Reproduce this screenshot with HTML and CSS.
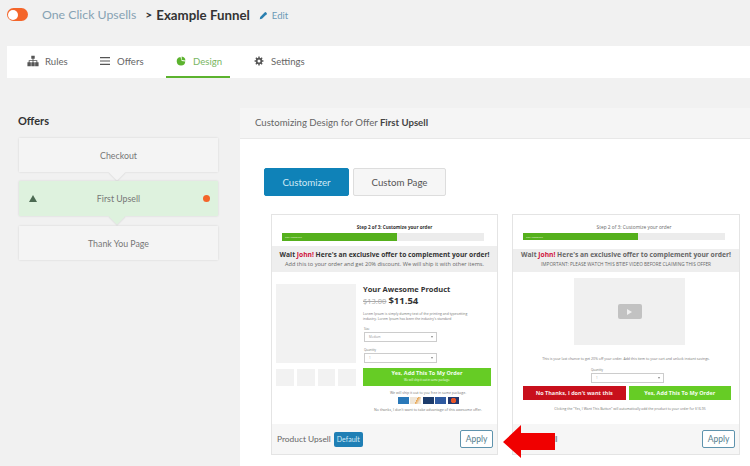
FILE: index.html
```html
<!DOCTYPE html>
<html lang="en">
<head>
    <meta charset="UTF-8">
    <title>Example Funnel</title>
    <link rel="stylesheet" href="styles.css">
</head>
<body>
    <div class="page-header">
        <span class="toggle"><span class="toggle-knob"></span></span>
        <span class="crumb">One Click Upsells</span>
        <span class="crumb-sep">&gt;</span>
        <span class="funnel-name">Example Funnel</span>
        <a class="edit-link">
            <svg class="edit-icon" viewBox="0 0 12 12"><path d="M1 11l.6-3L7.800 1.800a1 1 0 0 1 1.400 0l1 1a1 1 0 0 1 0 1.400L4 10.400z" fill="#2a7fb0"/></svg>
            Edit
        </a>
    </div>

    <div class="tabs">
        <a class="tab tab-rules">
            <svg class="tab-icon" viewBox="0 0 14 12"><path d="M5 0h4v3.500H7.500V5H12v2.500h1.500V12h-4V7.500h1.500V6h-3.500v1.500H9V12H5V7.500h1.500V6H3v1.500h1.500V12h-4V7.500H2V5h4.500V3.500H5z" fill="#555"/></svg>
            Rules
        </a>
        <a class="tab tab-offers">
            <svg class="tab-icon tab-icon-small" viewBox="0 0 10 10"><path d="M0 1h10v1.200H0zM0 4.400h10v1.200H0zM0 7.800h10v1.200H0z" fill="#555"/></svg>
            Offers
        </a>
        <a class="tab tab-design active">
            <svg class="tab-icon tab-icon-small" viewBox="0 0 14 14"><path d="M6.200 1.500A6 6 0 1 0 13 7.800L8 7z" fill="#5cb32e"/><path d="M8 .8a6 6 0 0 1 5.200 5.400L8 5.600z" fill="#5cb32e"/></svg>
            Design
        </a>
        <a class="tab tab-settings">
            <svg class="tab-icon tab-icon-small" viewBox="0 0 14 14"><circle cx="7" cy="7" r="3.300" fill="none" stroke="#555" stroke-width="2.400"/><path d="M7 .8v2.400M7 10.800v2.400M.8 7h2.400M10.800 7h2.400M2.600 2.600l1.700 1.700M9.700 9.700l1.700 1.700M2.600 11.400l1.700-1.700M9.700 4.300l1.700-1.700" stroke="#555" stroke-width="2"/></svg>
            Settings
        </a>
    </div>

    <div class="main">
        <div class="sidebar">
            <h3>Offers</h3>
            <div class="step">Checkout</div>
            <div class="step step-active">
                <span class="step-caret"></span>
                First Upsell
                <span class="step-dot"></span>
            </div>
            <div class="step step-last">Thank You Page</div>
        </div>

        <div class="panel">
            <div class="panel-head">Customizing Design for Offer <b>First Upsell</b></div>
            <div class="panel-body">
                <div class="mode-btns">
                    <a class="mode-btn mode-on">Customizer</a>
                    <a class="mode-btn">Custom Page</a>
                </div>
                <div class="templates">
                    <div class="template">
                        <div class="preview">
                            <div class="pv-step">Step 2 of 3: Customize your order</div>
                            <div class="pv-bar"><div class="pv-fill">60% Complete</div></div>
                            <div class="pv-band">
                                <div class="pv-wait">Wait <span class="pv-name">John!</span> Here's an exclusive offer to complement your order!</div>
                                <div class="pv-sub">Add this to your order and get 20% discount. We will ship it with other items.</div>
                            </div>
                            <div class="pv-product">
                                <div class="pv-gallery">
                                    <div class="pv-image"></div>
                                    <div class="pv-thumbs"><i></i><i></i><i></i><i></i></div>
                                </div>
                                <div class="pv-info">
                                    <div class="pv-title">Your Awesome Product</div>
                                    <div class="pv-price"><s>$13.00</s> <b>$11.54</b></div>
                                    <div class="pv-lorem">Lorem Ipsum is simply dummy text of the printing and typesetting industry. Lorem Ipsum has been the industry's standard</div>
                                    <div class="pv-label">Size</div>
                                    <div class="pv-select">Medium</div>
                                    <div class="pv-label">Quantity</div>
                                    <div class="pv-select">1</div>
                                    <div class="pv-yes pv-yes-big">Yes, Add This To My Order<small>We will ship it out in same package.</small></div>
                                    <div class="pv-note">We will ship it out to you free in same package.</div>
                                    <div class="pv-cards"><i class="c-amex"></i><i class="c-disc"></i><i class="c-dark"></i><i class="c-visa"></i><i class="c-mc"></i></div>
                                    <div class="pv-note pv-note-long">No thanks, I don't want to take advantage of this awesome offer.</div>
                                </div>
                            </div>
                        </div>
                        <div class="template-foot">
                            <span class="foot-name">Product Upsell</span>
                            <span class="badge">Default</span>
                            <a class="apply">Apply</a>
                        </div>
                    </div>

                    <div class="template template-video">
                        <div class="preview">
                            <div class="pv-step pv-step-light">Step 2 of 3: Customize your order</div>
                            <div class="pv-bar"><div class="pv-fill">60% Complete</div></div>
                            <div class="pv-band pv-band-tall">
                                <div class="pv-wait pv-wait-light">Wait <span class="pv-name">John!</span> Here's an exclusive offer to complement your order!</div>
                                <div class="pv-sub">IMPORTANT: PLEASE WATCH THIS BTIEF VIDEO BEFORE CLAIMING THIS OFFER</div>
                            </div>
                            <div class="pv-video"><span class="pv-play"></span></div>
                            <div class="pv-note pv-note-wide">This is your last chance to get 20% off your order. Add this item to your cart and unlock instant savings.</div>
                            <div class="pv-qty">
                                <div class="pv-label">Quantity</div>
                                <div class="pv-select">1</div>
                            </div>
                            <div class="pv-actions">
                                <div class="pv-no">No Thanks, I don't want this</div>
                                <div class="pv-yes">Yes, Add This To My Order</div>
                            </div>
                            <div class="pv-note pv-note-last">Clicking the "Yes, I Want This Button" will automatically add the product to your order for $16.95</div>
                        </div>
                        <div class="template-foot">
                            <span class="foot-name">Video Sell</span>
                            <a class="apply">Apply</a>
                        </div>
                    </div>
                </div>
            </div>
        </div>
    </div>

    <!-- red arrow drawn over the second template -->
    <svg class="red-arrow" viewBox="0 0 52 33"><path d="M0 17L18 0v8h34v17H18v8z" fill="#f00000"/></svg>
</body>
</html>
```

FILE: styles.css
```css
html, body {
    margin: 0;
    padding: 0;
    height: 466px;
    overflow: hidden;
}
body {
    position: relative;
    background-color: #f1f1f1;
    font-family: Lato, Arial, sans-serif;
    color: #444;
}
.page-header {
    display: flex;
    align-items: center;
    height: 29px;
    padding-left: 7px;
}
.toggle {
    width: 21px;
    height: 13px;
    border-radius: 7px;
    background-color: #f4652a;
    display: flex;
    align-items: center;
    padding-left: 1px;
    box-sizing: border-box;
}
.toggle-knob {
    width: 10px;
    height: 10px;
    border-radius: 50%;
    background-color: #fff;
}
.crumb {
    margin-left: 14px;
    font-size: 12.300px;
    color: #86a2b3;
}
.crumb-sep {
    margin-left: 9px;
    font-size: 12px;
    font-weight: 700;
    color: #333;
}
.funnel-name {
    margin-left: 4px;
    font-size: 13.300px;
    font-weight: 700;
    color: #333;
}
.edit-link {
    display: flex;
    align-items: center;
    margin-left: 9px;
    font-size: 9.500px;
    color: #6b9ab6;
    padding-top: 2px;
}
.edit-icon {
    width: 9px;
    height: 9px;
    margin-right: 4px;
}
.tabs {
    display: flex;
    height: 32px;
    margin: 17px 0 0 7px;
    background-color: #fff;
}
.tab {
    display: flex;
    align-items: center;
    box-sizing: border-box;
    height: 32px;
    padding-bottom: 2px;
    font-size: 9.600px;
    color: #666;
}
.tab-icon {
    width: 12px;
    height: 12px;
    margin-right: 6px;
}
.tab-icon-small {
    width: 10px;
    height: 10px;
    margin-right: 7px;
}
.tab-rules {
    margin-left: 20px;
    width: 73px;
}
.tab-offers {
    width: 66px;
}
.tab-design {
    width: 64px;
    padding-left: 10px;
}
.tab-settings {
    margin-left: 24px;
}
.tab.active {
    color: #79b662;
    border-bottom: 2px solid #5cb32e;
    padding-bottom: 0;
}
.main {
    display: flex;
    margin-top: 30px;
    height: 358px;
}
.sidebar {
    width: 240px;
    flex-shrink: 0;
    padding: 6px 0 0 18px;
    box-sizing: border-box;
}
.sidebar h3 {
    margin: 0 0 10px;
    font-size: 11px;
    font-weight: 700;
    line-height: 14px;
    color: #333;
}
.step {
    position: relative;
    display: flex;
    align-items: center;
    justify-content: center;
    width: 199px;
    height: 34px;
    margin: 0 0 9px 1px;
    background-color: #f4f4f4;
    box-shadow: 0 0 2px rgba(0, 0, 0, 0.12);
    font-size: 8.800px;
    color: #777;
}
/* little notch pointing to the next step */
.step::after {
    content: "";
    position: absolute;
    left: 92px;
    bottom: -6px;
    width: 12px;
    height: 12px;
    background-color: inherit;
    transform: rotate(45deg);
    box-shadow: 1px 1px 1px rgba(0, 0, 0, 0.06);
}
.step-last::after {
    display: none;
}
.step-active {
    height: 35px;
    margin-bottom: 10px;
    background-color: #def2de;
    z-index: 1;
}
.step-caret {
    position: absolute;
    left: 10px;
    top: 14px;
    border-left: 4px solid transparent;
    border-right: 4px solid transparent;
    border-bottom: 7px solid #4c6a52;
}
.step-dot {
    position: absolute;
    right: 8px;
    top: 14px;
    width: 7px;
    height: 7px;
    border-radius: 50%;
    background-color: #f4652a;
}
.panel {
    flex: 1;
    background-color: #fff;
}
.panel-head {
    height: 31px;
    line-height: 30px;
    padding-left: 15px;
    background-color: #f5f5f5;
    border-bottom: 1px solid #e8e8e8;
    box-sizing: border-box;
    font-size: 9.600px;
    color: #666;
}
.panel-head b {
    font-weight: 700;
    color: #444;
}
.panel-body {
    padding: 29px 10px 0 24px;
}
.mode-btns {
    display: flex;
    gap: 4px;
}
.mode-btn {
    display: flex;
    align-items: center;
    justify-content: center;
    box-sizing: border-box;
    width: 93px;
    height: 28px;
    background-color: #f6f6f6;
    border: 1px solid #ddd;
    border-radius: 2px;
    font-size: 9.700px;
    color: #555;
}
.mode-on {
    width: 85px;
    background-color: #0f82b8;
    border-color: #0f82b8;
    color: #cfe9f5;
}
.templates {
    display: flex;
    gap: 14px;
    margin: 18px 0 0 7px;
}
.template {
    width: 227px;
    height: 241px;
    flex-shrink: 0;
    box-sizing: border-box;
    border: 1px solid #e4e4e4;
    display: flex;
    flex-direction: column;
}
.template-video {
    width: 228px;
}
.preview {
    flex: 1;
    overflow: hidden;
    padding-top: 9px;
    font-family: "Open Sans", Arial, sans-serif;
}
.template-foot {
    display: flex;
    align-items: center;
    height: 30px;
    padding: 0 4px 0 5px;
    background-color: #f6f6f6;
}
.foot-name {
    font-size: 8.400px;
    color: #666;
}
/* only the tail of this label shows past the arrow */
.template-video .foot-name {
    padding-left: 3px;
}
.badge {
    margin-left: 3px;
    padding: 0 3px;
    height: 15px;
    line-height: 15px;
    border-radius: 2px;
    background-color: #1f7fb5;
    color: #d5ecf7;
    font-size: 7px;
}
.apply {
    margin-left: auto;
    box-sizing: border-box;
    width: 33px;
    height: 18px;
    line-height: 16px;
    text-align: center;
    border: 1px solid #5e93ad;
    border-radius: 2px;
    font-size: 8.500px;
    color: #55808f;
    background-color: #fff;
}
.pv-step {
    padding-left: 20px;
    text-align: center;
    font-size: 4.600px;
    font-weight: 700;
    line-height: 7px;
    color: #333;
}
.pv-step-light {
    padding-left: 16px;
    font-size: 4.800px;
    font-weight: 400;
    color: #666;
}
.pv-bar {
    height: 8px;
    margin: 2px 13px 0 10px;
    background-color: #ececec;
}
.template-video .pv-bar {
    height: 7px;
    margin: 2px 14px 0 10px;
}
.pv-fill {
    width: 57%;
    height: 100%;
    background-color: #55b01c;
    color: #e8f7dc;
    font-size: 2.500px;
    line-height: 8px;
    padding-left: 3px;
    box-sizing: border-box;
}
.pv-band {
    height: 26px;
    margin-top: 5px;
    background-color: #eee;
    text-align: center;
    padding-top: 3px;
    box-sizing: border-box;
}
.pv-band-tall {
    height: 23px;
    margin-top: 9px;
    padding-top: 0;
}
.pv-wait {
    font-size: 6.700px;
    font-weight: 700;
    line-height: 11px;
    white-space: nowrap;
    color: #333;
}
.pv-wait-light {
    color: #666;
}
.pv-name {
    color: #d0123c;
}
.pv-sub {
    font-size: 5.600px;
    line-height: 8px;
    white-space: nowrap;
    color: #666;
}
.template-video .pv-sub {
    font-size: 4.700px;
}
.pv-product {
    display: flex;
    padding: 12px 4px 0 4px;
}
.pv-gallery {
    width: 80px;
    flex-shrink: 0;
}
.pv-image {
    height: 79px;
    background-color: #f2f2f2;
}
.pv-thumbs {
    display: flex;
    gap: 3px;
    margin-top: 6px;
}
.pv-thumbs i {
    flex: 1;
    height: 17px;
    background-color: #f2f2f2;
}
.pv-info {
    flex: 1;
    margin-left: 7px;
}
.pv-title {
    font-size: 7.500px;
    font-weight: 700;
    line-height: 10px;
    color: #333;
}
.pv-price {
    font-size: 7.500px;
    line-height: 14px;
    color: #aaa;
}
.pv-price b {
    font-size: 9.500px;
    color: #333;
}
.pv-lorem {
    max-width: 118px;
    margin-top: 3px;
    font-size: 3.400px;
    line-height: 5px;
    color: #777;
}
.pv-label {
    margin: 6px 0 1px 1px;
    font-size: 3px;
    line-height: 4px;
    color: #777;
}
.pv-select {
    position: relative;
    box-sizing: border-box;
    width: 73px;
    height: 10px;
    margin-left: 1px;
    border: 1px solid #ccc;
    font-size: 3px;
    line-height: 8px;
    padding-left: 4px;
    color: #999;
}
.pv-select::after {
    content: "";
    position: absolute;
    right: 3px;
    top: 3px;
    border-left: 1.500px solid transparent;
    border-right: 1.500px solid transparent;
    border-top: 2px solid #888;
}
.pv-yes {
    flex: 1;
    background-color: #66cc25;
    color: #f3fff0;
    font-size: 5.500px;
    font-weight: 700;
    line-height: 14px;
    text-align: center;
    white-space: nowrap;
}
.pv-yes-big {
    height: 18px;
    margin: 5px 2px 0 0;
    line-height: 9px;
    padding-top: 1px;
    box-sizing: border-box;
}
.pv-yes small {
    display: block;
    font-size: 2.800px;
    line-height: 5px;
    font-weight: 400;
}
.pv-note {
    margin-top: 4px;
    text-align: center;
    font-size: 3.500px;
    line-height: 5px;
    white-space: nowrap;
    color: #777;
}
.pv-note-long {
    margin-top: 3px;
    font-size: 3.600px;
}
.pv-note-wide {
    margin-top: 11px;
}
.pv-note-last {
    margin-top: 6px;
    padding-left: 8px;
    font-size: 3.400px;
}
.pv-cards {
    display: flex;
    justify-content: center;
    gap: 1.500px;
    margin-top: 2px;
}
.pv-cards i {
    width: 11px;
    height: 7px;
}
.c-amex { background-color: #2a78b8; }
.c-disc { background: linear-gradient(120deg, #efe6d8 55%, #e9a24a 55%, #efe6d8 80%); }
.c-dark { background-color: #1d3c6c; }
.c-visa { background-color: #2f5aa0; }
.c-mc { background: radial-gradient(circle, #e8562a 0, #e8562a 2.500px, #24386e 3px); }
.pv-video {
    display: flex;
    align-items: center;
    justify-content: center;
    width: 111px;
    height: 67px;
    margin: 6px 0 0 61px;
    background-color: #f0f0f0;
}
.pv-play {
    display: flex;
    align-items: center;
    justify-content: center;
    width: 24px;
    height: 15px;
    border-radius: 2px;
    background-color: #c2c2c2;
}
.pv-play::after {
    content: "";
    border-left: 5px solid #f0f0f0;
    border-top: 3px solid transparent;
    border-bottom: 3px solid transparent;
}
.pv-qty {
    width: 74px;
    margin: 7px 0 0 77px;
}
.pv-qty .pv-label {
    margin-top: 0;
}
.pv-actions {
    display: flex;
    gap: 3px;
    height: 14px;
    margin: 3px 8px 0 10px;
}
.pv-no {
    flex: 1;
    background-color: #c8101c;
    color: #fbeaea;
    font-size: 5.500px;
    font-weight: 700;
    line-height: 14px;
    text-align: center;
    white-space: nowrap;
}
.red-arrow {
    position: absolute;
    left: 503px;
    top: 425px;
    width: 52px;
    height: 33px;
}
```
